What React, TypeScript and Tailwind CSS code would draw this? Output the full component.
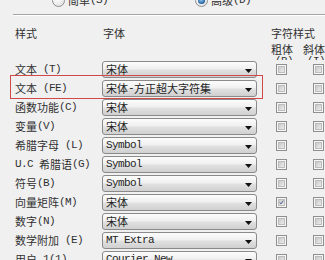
import React from "react";

const CJK = /([\u2E80-\u9FFF\uFF00-\uFFEF\u3000-\u303F]+)/;

function Txt({ s }: { s: string }) {
  const parts = s.split(CJK).filter((p) => p.length > 0);
  return (
    <span className="inline-flex items-center whitespace-pre leading-none">
      {parts.map((p, i) =>
        CJK.test(p) ? (
          <span key={i} className="inline-flex items-center h-[12px] font-['Noto_Sans_CJK_SC',sans-serif] text-[11px] leading-none">
            {p}
          </span>
        ) : (
          <span key={i} className="inline-flex items-center h-[12px] font-['Liberation_Mono',monospace] text-[11px] tracking-[-0.6px] leading-none">
            {p}
          </span>
        )
      )}
    </span>
  );
}

function Radio({ checked }: { checked?: boolean }) {
  return (
    <div className="w-[13px] h-[13px] rounded-full border border-[#8e8f8f] bg-[radial-gradient(circle_at_40%_35%,#ffffff,#dcdcdc)] flex items-center justify-center shrink-0">
      {checked && (
        <div className="w-[7px] h-[7px] rounded-full bg-[radial-gradient(circle_at_45%_40%,#9fd0f5,#2b6aa8_60%,#1c4f82)]" />
      )}
    </div>
  );
}

function Check({ checked }: { checked?: boolean }) {
  return (
    <div className="w-[11px] h-[11px] border border-[#8f8f8f] bg-[#f6f6f6] p-px shrink-0">
      <div className="w-full h-full border border-[#bdbdbd] bg-[linear-gradient(135deg,#c9c9c9,#ececec)] flex items-center justify-center">
        {checked && (
          <svg width="9" height="9" viewBox="0 0 9 9" className="-mt-px">
            <path d="M1.5 4.5 L3.5 7 L7.8 1.2" fill="none" stroke="#3a4f86" strokeWidth="1.7" />
          </svg>
        )}
      </div>
    </div>
  );
}

function Combo({ text }: { text: string }) {
  return (
    <div className="w-[155px] h-[17px] border border-[#8a8a8a] rounded-[3px] bg-[linear-gradient(#fcfcfc,#f0f0f0_45%,#e0e0e0_55%,#d0d0d0)] flex items-center pl-[3px] pr-[4px] shrink-0 overflow-hidden">
      <div className="flex-1 flex items-center text-[#1e1e1e]">
        <Txt s={text} />
      </div>
      <svg width="7" height="4" viewBox="0 0 7 4" className="mt-[2px]">
        <polygon points="0,0 7,0 3.5,4" fill="#111" />
      </svg>
    </div>
  );
}

const rows: [string, string, boolean][] = [
  ["文本 (T)", "宋体", false],
  ["文本 (FE)", "宋体-方正超大字符集", false],
  ["函数功能(C)", "宋体", false],
  ["变量(V)", "宋体", false],
  ["希腊字母 (L)", "Symbol", false],
  ["U.C 希腊语(G)", "Symbol", false],
  ["符号(B)", "Symbol", false],
  ["向量矩阵(M)", "宋体", true],
  ["数字(N)", "宋体", false],
  ["数学附加 (E)", "MT Extra", false],
  ["用户 1(1)", "Courier New", false],
];

export default function App() {
  return (
    <div className="relative w-[325px] h-[260px] overflow-hidden bg-[#f0f0f0] text-[#303030]">
      {/* radio row */}
      <div className="flex items-center h-[13px] -mt-[6px]">
        <div className="ml-[52px]">
          <Radio />
        </div>
        <div className="ml-[3px] w-[127px] flex items-center">
          <Txt s="简单(S)" />
        </div>
        <Radio checked />
        <div className="ml-[3px] flex items-center">
          <Txt s="高级(D)" />
        </div>
      </div>

      {/* separator */}
      <div className="mt-[7px] ml-[13px] h-px bg-[#a6a6a6]" />
      <div className="ml-[13px] h-px bg-[#ffffff]" />

      {/* header */}
      <div className="h-[44px] overflow-hidden">
        <div className="flex items-center h-[12px] mt-[11px]">
          <div className="w-[102px] pl-[15px] flex items-center">
            <Txt s="样式" />
          </div>
          <div className="w-[169px] pl-[1px] flex items-center">
            <Txt s="字体" />
          </div>
          <div className="flex items-center">
            <Txt s="字符样式" />
          </div>
        </div>
        <div className="flex mt-[4px] ml-[271px]">
          <div className="w-[35px] flex flex-col items-start">
            <div className="h-[12px] flex items-center">
              <Txt s="粗体" />
            </div>
            <div className="h-[12px] flex items-center pl-[4px]">
              <Txt s="(B)" />
            </div>
          </div>
          <div className="flex flex-col items-start">
            <div className="h-[12px] flex items-center">
              <Txt s="斜体" />
            </div>
            <div className="h-[12px] flex items-center pl-[4px]">
              <Txt s="(I)" />
            </div>
          </div>
        </div>
      </div>

      {/* rows */}
      <div className="flex flex-col">
        {rows.map(([label, font, bold], i) => (
          <div key={i} className="flex items-center h-[19px]">
            <div className="w-[102px] pl-[15px] flex items-center shrink-0">
              <Txt s={label} />
            </div>
            <Combo text={font} />
            <div className="ml-[19px]">
              <Check checked={bold} />
            </div>
            <div className="ml-[26px]">
              <Check />
            </div>
          </div>
        ))}
      </div>

      {/* red highlight box */}
      <div className="absolute left-[10px] top-[75px] w-[253px] h-[24px] border border-[#d04848]" />
    </div>
  );
}
